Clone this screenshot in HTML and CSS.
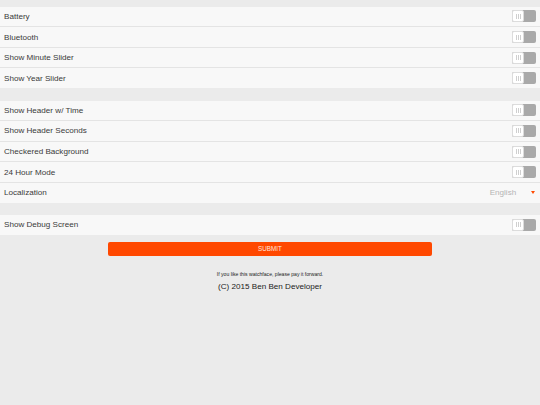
FILE: index.html
```html
<!DOCTYPE html>
<html>
<head>
<meta charset="utf-8">
<link rel="stylesheet" href="styles.css">
</head>
<body>
<div class="page">
  <div class="group">
    <div class="row"><span class="label">Battery</span><span class="toggle"><span class="knob"><i></i><i></i><i></i></span></span></div>
    <div class="row"><span class="label">Bluetooth</span><span class="toggle"><span class="knob"><i></i><i></i><i></i></span></span></div>
    <div class="row"><span class="label">Show Minute Slider</span><span class="toggle"><span class="knob"><i></i><i></i><i></i></span></span></div>
    <div class="row"><span class="label">Show Year Slider</span><span class="toggle"><span class="knob"><i></i><i></i><i></i></span></span></div>
  </div>
  <div class="group">
    <div class="row"><span class="label">Show Header w/ Time</span><span class="toggle"><span class="knob"><i></i><i></i><i></i></span></span></div>
    <div class="row"><span class="label">Show Header Seconds</span><span class="toggle"><span class="knob"><i></i><i></i><i></i></span></span></div>
    <div class="row"><span class="label">Checkered Background</span><span class="toggle"><span class="knob"><i></i><i></i><i></i></span></span></div>
    <div class="row"><span class="label">24 Hour Mode</span><span class="toggle"><span class="knob"><i></i><i></i><i></i></span></span></div>
    <div class="row"><span class="label">Localization</span><span class="select"><span class="value">English</span><span class="caret"></span></span></div>
  </div>
  <div class="group">
    <div class="row"><span class="label">Show Debug Screen</span><span class="toggle"><span class="knob"><i></i><i></i><i></i></span></span></div>
  </div>
  <div class="actions"><button class="submit">SUBMIT</button></div>
  <p class="note">If you like this watchface, please pay it forward.</p>
  <p class="copy">(C) 2015 Ben Ben Developer</p>
</div>
</body>
</html>
```
FILE: styles.css
```css
html, body {
  margin: 0;
  padding: 0;
  background: #ebebeb;
  font-family: "Liberation Sans", Arial, sans-serif;
  color: #3a3a3a;
}
.page {
  padding-top: 6.7px;
}
.group {
  margin-bottom: 12.5px;
  background: #f8f8f8;
}
.row {
  height: 19.6px;
  display: flex;
  align-items: center;
  justify-content: space-between;
  padding: 0 4.3px 0 4px;
  font-size: 8.1px;
}
.row + .row {
  border-top: 1px solid #e4e4e4;
}
.toggle {
  width: 23.5px;
  height: 12px;
  box-sizing: border-box;
  background: #a9a9a9;
  border-radius: 2px;
  display: flex;
}
.knob {
  width: 12px;
  height: 12px;
  box-sizing: border-box;
  background: #fff;
  border: 1px solid #dcdcdc;
  border-radius: 2px;
  display: flex;
  align-items: center;
  justify-content: center;
  gap: 1px;
}
.knob i {
  display: block;
  width: 0.7px;
  height: 5px;
  background: #cfcfcf;
}
.select {
  display: flex;
  align-items: center;
}
.value {
  color: #b4b4b4;
  font-size: 8.1px;
  margin-right: 15px;
}
.caret {
  width: 0;
  height: 0;
  border-left: 2.6px solid transparent;
  border-right: 2.6px solid transparent;
  border-top: 3.2px solid #ff4a00;
  margin-right: 0.5px;
}
.actions {
  display: flex;
  justify-content: center;
  margin-top: -5.3px;
}
.submit {
  width: 324px;
  height: 14.3px;
  padding: 0;
  border: none;
  border-radius: 2px;
  background: #ff4800;
  color: #ffe7dc;
  font-family: "Liberation Sans", Arial, sans-serif;
  font-size: 6.3px;
  line-height: 14.8px;
}
.note {
  margin: 14.5px 0 0;
  text-align: center;
  font-size: 5.1px;
  line-height: 6px;
  color: #222;
}
.copy {
  margin: 5.5px 0 0;
  text-align: center;
  font-size: 8.1px;
  line-height: 10px;
  color: #222;
}
```
